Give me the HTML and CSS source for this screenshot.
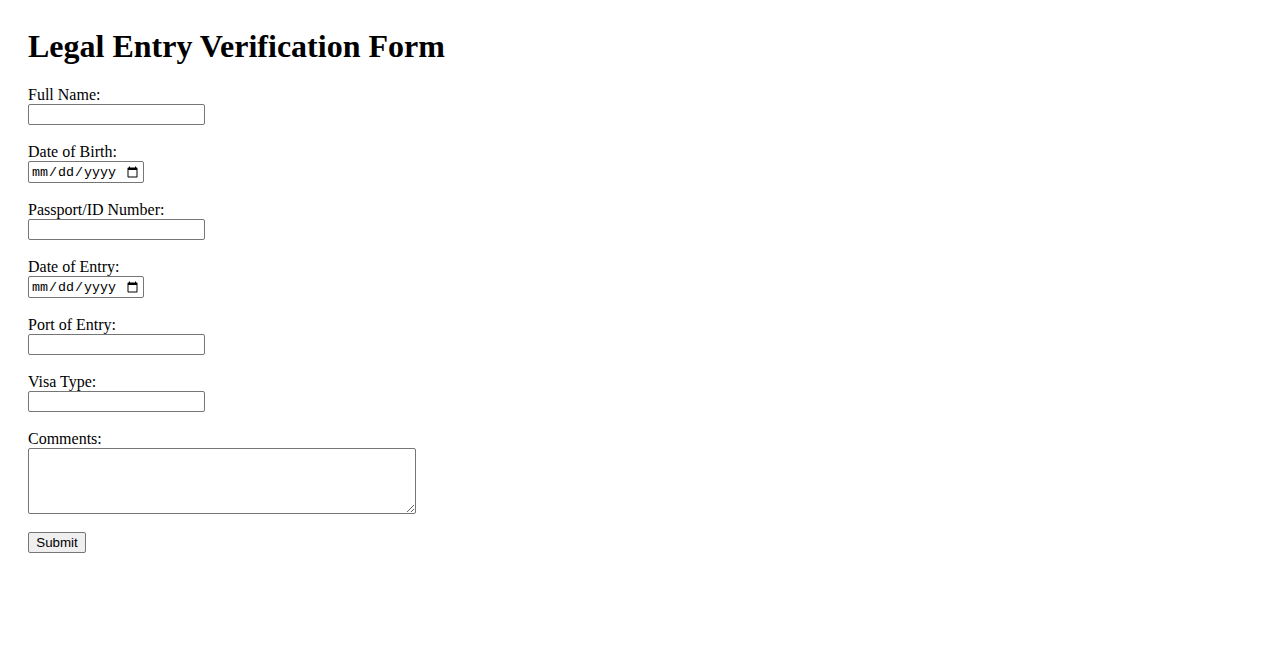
FILE: index.html
```html
<!DOCTYPE html>
<html lang="en">
<head>
<meta charset="utf-8">
<title>Legal Entry Verification Form</title>
<link rel="stylesheet" href="styles.css">
</head>
<body class="page">
<h1 class="title">Legal Entry Verification Form</h1>
<form class="form">
<label class="label" for="fullName">Full Name:</label><br>
<input class="field text" type="text" id="fullName" name="fullName"><br><br>
<label class="label" for="dob">Date of Birth:</label><br>
<input class="field date" type="date" id="dob" name="dob"><br><br>
<label class="label" for="passport">Passport/ID Number:</label><br>
<input class="field text" type="text" id="passport" name="passport"><br><br>
<label class="label" for="entryDate">Date of Entry:</label><br>
<input class="field date" type="date" id="entryDate" name="entryDate"><br><br>
<label class="label" for="port">Port of Entry:</label><br>
<input class="field text" type="text" id="port" name="port"><br><br>
<label class="label" for="visa">Visa Type:</label><br>
<input class="field text" type="text" id="visa" name="visa"><br><br>
<label class="label" for="comments">Comments:</label><br>
<textarea class="field area" id="comments" name="comments"></textarea><br><br>
<input class="submit" type="submit" value="Submit">
</form>
</body>
</html>
```
FILE: styles.css
```css
.page {
  margin: 0;
  padding: 28px;
  font-family: "Liberation Serif", "Times New Roman", serif;
  font-size: 16px;
  color: #000;
  background: #fff;
}
.title {
  margin: 0 0 0.67em 0;
  font-size: 32px;
  font-weight: bold;
}
.form {
  margin: 0;
}
.field {
  box-sizing: border-box;
  border: 1px solid #767676;
  border-radius: 2px;
  background: #fff;
  font-family: "Liberation Sans", Arial, sans-serif;
  font-size: 13.33px;
  margin: 0;
}
.text {
  width: 177px;
  height: 21px;
  padding: 1px 2px;
}
.date {
  width: 116px;
  height: 22px;
  padding: 1px 2px;
  font-family: "Liberation Mono", "Courier New", monospace;
}
.area {
  width: 388px;
  height: 66px;
  padding: 2px;
  vertical-align: bottom;
}
.submit {
  box-sizing: border-box;
  width: 58px;
  height: 21px;
  margin: 0;
  padding: 1px 6px;
  font-family: "Liberation Sans", Arial, sans-serif;
  font-size: 13.33px;
  color: #000;
  background: #efefef;
  border: 1px solid #767676;
  border-radius: 2px;
}
```
